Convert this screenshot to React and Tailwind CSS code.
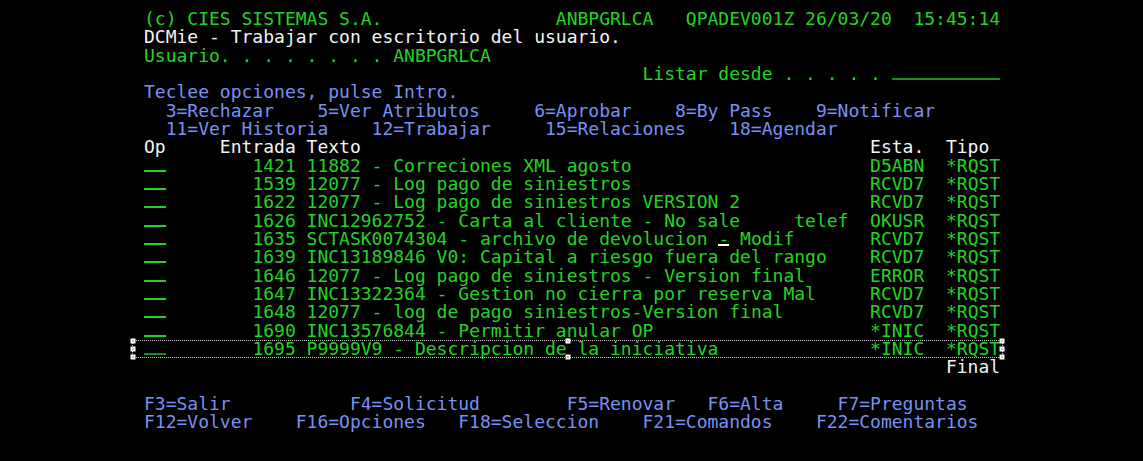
import React from 'react';

const GREEN = 'text-[#22d422]';
const BLUE = 'text-[#7a90f4]';
const WHITE = 'text-[#f4f4f4]';

const entries = [
  ['1421', '11882 - Correciones XML agosto', 'D5ABN'],
  ['1539', '12077 - Log pago de siniestros', 'RCVD7'],
  ['1622', '12077 - Log pago de siniestros VERSION 2', 'RCVD7'],
  ['1626', 'INC12962752 - Carta al cliente - No sale     telef', 'OKUSR'],
  ['1635', 'SCTASK0074304 - archivo de devolucion - Modif', 'RCVD7', 38],
  ['1639', 'INC13189846 V0: Capital a riesgo fuera del rango', 'RCVD7'],
  ['1646', '12077 - Log pago de siniestros - Version final', 'ERROR'],
  ['1647', 'INC13322364 - Gestion no cierra por reserva Mal', 'RCVD7'],
  ['1648', '12077 - log de pago siniestros-Version final', 'RCVD7'],
  ['1690', 'INC13576844 - Permitir anular OP', '*INIC'],
  ['1695', 'P9999V9 - Descripcion de la iniciativa', '*INIC'],
];

function Line({ children }) {
  return <div className="h-[18.33px] leading-[18.33px] whitespace-pre">{children}</div>;
}

// input field: blanks with an underline drawn under them
function Field({ width, color }) {
  return (
    <span className="relative">
      {' '.repeat(width)}
      <span className={`absolute left-0 right-0 bottom-[4px] h-[2px] ${color}`} />
    </span>
  );
}

function Handle({ pos }) {
  return (
    <div className={`absolute w-[5px] h-[5px] bg-white -translate-x-1/2 -translate-y-1/2 flex items-center justify-center ${pos}`}>
      <div className="w-[1px] h-[1px] bg-black" />
    </div>
  );
}

function EntryRow({ num, text, esta, cursor, last }) {
  const padded = text.padEnd(52);
  return (
    <Line>
      <Field width={2} color={last ? 'bg-[#1c8c1c]' : 'bg-[#22d422]'} />
      <span className={GREEN}>
        {'        ' + num.padStart(4) + ' '}
        {cursor === undefined ? (
          padded
        ) : (
          <>
            {padded.slice(0, cursor)}
            <span className="relative">
              {padded[cursor]}
              <span className="absolute left-0 right-0 bottom-[3px] h-[2px] bg-white" />
            </span>
            {padded.slice(cursor + 1)}
          </>
        )}
        {esta.padEnd(7) + '*RQST'}
      </span>
    </Line>
  );
}

export default function App() {
  return (
    <div className="relative w-full min-h-screen bg-black overflow-hidden">
      <div className="pl-[144px] pt-[10px] text-[18px] font-['DejaVu_Sans_Mono','Liberation_Mono',monospace]">
        <Line>
          <span className={GREEN}>
            {'(c) CIES SISTEMAS S.A.                ANBPGRLCA   QPADEV001Z 26/03/20  15:45:14'}
          </span>
        </Line>
        <Line>
          <span className={WHITE}>DCMie - Trabajar con escritorio del usuario.</span>
        </Line>
        <Line>
          <span className={GREEN}>Usuario. . . . . . . . ANBPGRLCA</span>
        </Line>
        <Line>
          <span className={GREEN}>{' '.repeat(46) + 'Listar desde . . . . . '}</span>
          <Field width={10} color="bg-[#1c8c1c]" />
        </Line>
        <Line>
          <span className={BLUE}>Teclee opciones, pulse Intro.</span>
        </Line>
        <Line>
          <span className={BLUE}>
            {'  3=Rechazar    5=Ver Atributos     6=Aprobar    8=By Pass    9=Notificar'}
          </span>
        </Line>
        <Line>
          <span className={BLUE}>
            {'  11=Ver Historia    12=Trabajar     15=Relaciones    18=Agendar'}
          </span>
        </Line>
        <Line>
          <span className={WHITE}>
            {'Op     Entrada Texto' + ' '.repeat(47) + 'Esta.  Tipo'}
          </span>
        </Line>
        {entries.map(([num, text, esta, cursor], i) => (
          <EntryRow
            key={num}
            num={num}
            text={text}
            esta={esta}
            cursor={cursor}
            last={i === entries.length - 1}
          />
        ))}
        <Line>
          <span className={WHITE}>{' '.repeat(74) + 'Final'}</span>
        </Line>
        <Line>{' '}</Line>
        <Line>
          <span className={BLUE}>
            {'F3=Salir           F4=Solicitud        F5=Renovar   F6=Alta     F7=Preguntas'}
          </span>
        </Line>
        <Line>
          <span className={BLUE}>
            {'F12=Volver    F16=Opciones   F18=Seleccion    F21=Comandos    F22=Comentarios'}
          </span>
        </Line>
      </div>

      {/* selection rectangle drawn over the last entry */}
      <div className="absolute left-[132px] top-[340px] w-[871px] h-[18px] border border-dotted border-[#cfcfcf]">
        <Handle pos="left-0 top-0" />
        <Handle pos="left-1/2 top-0" />
        <Handle pos="left-full top-0" />
        <Handle pos="left-0 top-1/2" />
        <Handle pos="left-full top-1/2" />
        <Handle pos="left-0 top-full" />
        <Handle pos="left-1/2 top-full" />
        <Handle pos="left-full top-full" />
      </div>
    </div>
  );
}
